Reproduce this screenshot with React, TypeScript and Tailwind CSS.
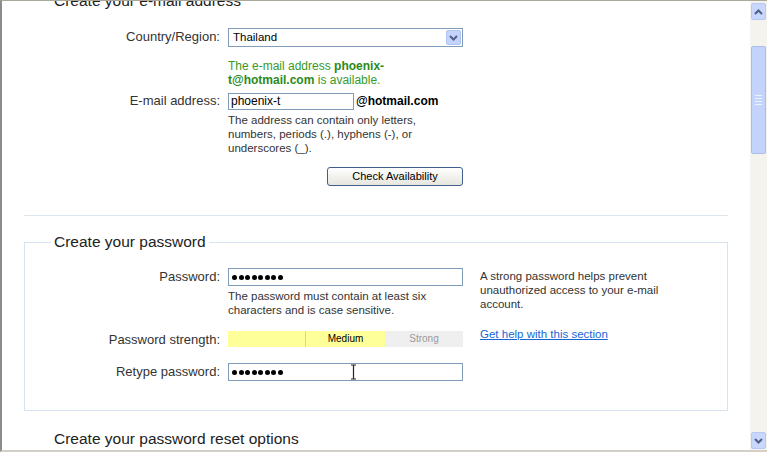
import React from 'react';

const font = { fontFamily: '"Liberation Sans", Arial, sans-serif' };

const Dots = () => (
  <div className="flex items-center gap-[1.5px]">
    {Array.from({ length: 8 }).map((_, i) => (
      <span key={i} className="w-[5px] h-[5px] rounded-full bg-black" />
    ))}
  </div>
);

const Row = ({ label, children, className = '', labelW = 'w-[204px]' }: any) => (
  <div className={`flex ${className}`}>
    <div className={`${labelW} shrink-0 text-right pr-[8px] pt-[1px] text-[13px] leading-[16px] text-[#333]`}>{label}</div>
    <div className="flex-1 min-w-0">{children}</div>
  </div>
);

const Chevron = ({ up }: { up?: boolean }) => (
  <svg width="9" height="6" viewBox="0 0 9 6">
    <path d={up ? 'M1 5 L4.5 1.5 L8 5' : 'M1 1 L4.5 4.5 L8 1'} stroke="#4d6185" strokeWidth="2" fill="none" />
  </svg>
);

const Scrollbar = () => (
  <div className="w-[17px] shrink-0 bg-[#f4f3ee] flex flex-col pt-[2px] pb-[1px] px-[1px]">
    <div className="h-[17px] rounded-[2px] border border-[#b7c9f2] bg-[#c8d7fb] flex items-center justify-center">
      <Chevron up />
    </div>
    <div className="h-[26px]" />
    <div className="h-[108px] rounded-[2px] border border-[#a9bdee] bg-[#c3d3fb] flex flex-col items-center justify-center gap-[2px]">
      {[0, 1, 2, 3].map((i) => (
        <span key={i} className="w-[7px] h-px bg-[#eef3fe]" />
      ))}
    </div>
    <div className="flex-1" />
    <div className="h-[17px] rounded-[2px] border border-[#b7c9f2] bg-[#c8d7fb] flex items-center justify-center">
      <Chevron />
    </div>
  </div>
);

export default function App() {
  return (
    <div
      style={font}
      className="w-[767px] h-[452px] overflow-hidden bg-white flex border-t border-t-[#aca899] border-l-2 border-l-[#8c8c8c] border-b-2 border-b-[#d4d0c8]"
    >
      <div className="flex-1 min-w-0 overflow-hidden">
        <div className="-mt-[9px] pl-[22px] w-[726px]">
          {/* e-mail section */}
          <h2 className="pl-[30px] text-[15.5px] leading-[18px] text-[#222]">Create your e-mail address</h2>

          <Row label="Country/Region:" className="mt-[18px]">
            <div className="w-[235px] h-[19px] border border-[#7f9db9] flex items-center justify-between pl-[4px] pr-[1px] text-[11.5px] text-black">
              <span>Thailand</span>
              <div className="w-[15px] h-[15px] rounded-[2px] bg-[#c3d3fb] border border-[#b2c5f0] flex items-center justify-center">
                <Chevron />
              </div>
            </div>
          </Row>

          <Row label="" className="mt-[12px]">
            <p className="w-[240px] text-[12px] leading-[14px] text-[#3a9a28]">
              The e-mail address <b className="text-[#2a8a1a]">phoenix-t@hotmail.com</b> is available.
            </p>
          </Row>

          <Row label="E-mail address:" className="mt-[5px]">
            <div className="flex items-center">
              <div className="w-[126px] h-[17px] border border-[#7f9db9] pl-[2px] text-[12px] leading-[15px] text-black">phoenix-t</div>
              <span className="ml-[2px] text-[12px] font-bold text-black">@hotmail.com</span>
            </div>
            <p className="mt-[3px] w-[235px] text-[11.5px] leading-[14px] text-[#333]">
              The address can contain only letters, numbers, periods (.), hyphens (-), or underscores (_).
            </p>
          </Row>

          <Row label="" className="mt-[12px]">
            <div className="flex justify-end w-[235px]">
              <button className="w-[136px] h-[19px] rounded-[3px] border border-[#3f5f8f] bg-gradient-to-b from-white to-[#e6e5de] text-[11px] leading-[15px] text-black">
                Check Availability
              </button>
            </div>
          </Row>

          <div className="mt-[29px] h-px bg-[#dde6ef]" />

          {/* password section */}
          <fieldset className="mt-[17px] border border-[#d6e3f0] h-[178px]">
            <legend className="ml-[26px] px-[3px] text-[15.5px] leading-[18px] text-[#222]">Create your password</legend>
            <div className="flex">
              <div className="w-[454px] shrink-0">
                <Row label="Password:" labelW="w-[203px]" className="mt-[17px]">
                  <div className="w-[235px] h-[18px] border border-[#7f9db9] pl-[3px] flex items-center">
                    <Dots />
                  </div>
                  <p className="mt-[3px] w-[235px] text-[11.5px] leading-[14px] text-[#333]">
                    The password must contain at least six characters and is case sensitive.
                  </p>
                </Row>

                <Row label="Password strength:" labelW="w-[203px]" className="mt-[14px]">
                  <div className="w-[235px] h-[16px] flex text-[10px] leading-[16px] text-center">
                    <div className="w-[78px] bg-[#ffff9a] border-r border-[#d9d98c]" />
                    <div className="w-[79px] bg-[#ffff9a] text-black">Medium</div>
                    <div className="flex-1 bg-[#efefef] text-[#9a9a9a]">Strong</div>
                  </div>
                </Row>

                <Row label="Retype password:" labelW="w-[203px]" className="mt-[15px]">
                  <div className="relative w-[235px] h-[18px] border border-[#7f9db9] pl-[3px] flex items-center">
                    <Dots />
                    <svg className="absolute left-[121px] top-[0px]" width="7" height="16" viewBox="0 0 7 16">
                      <path d="M1 1 H6 M3.5 1 V15 M1 15 H6" stroke="#222" strokeWidth="1.2" fill="none" />
                    </svg>
                  </div>
                </Row>
              </div>
              <div className="pt-[18px] pl-[1px] w-[230px]">
                <p className="w-[220px] text-[11.5px] leading-[14px] text-[#333]">
                  A strong password helps prevent unauthorized access to your e-mail account.
                </p>
                <a className="block mt-[16px] text-[11.5px] leading-[14px] text-[#1866d6] underline">Get help with this section</a>
              </div>
            </div>
          </fieldset>

          <h2 className="mt-[19px] pl-[30px] text-[15.5px] leading-[18px] text-[#222]">Create your password reset options</h2>
        </div>
      </div>
      <Scrollbar />
    </div>
  );
}
